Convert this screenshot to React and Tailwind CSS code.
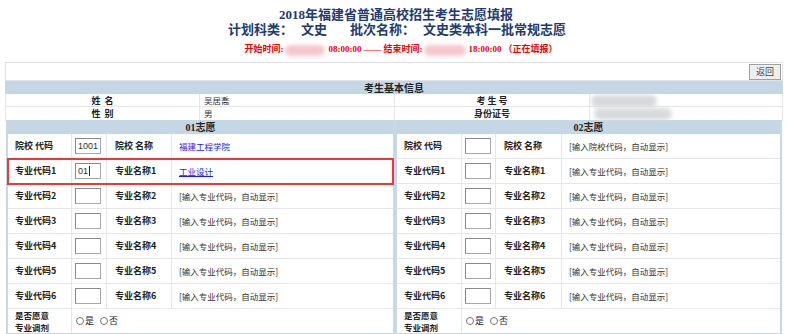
import React from "react";

const CJK = { fontFamily: '"Noto Sans CJK SC", "Noto Sans", sans-serif' };
const SERIF = { fontFamily: '"Liberation Serif", "Noto Sans CJK SC", serif' };

function Blob({ w, h, color, className = "" }) {
  return (
    <span
      className={`inline-block rounded-full blur-[2px] align-middle ${className}`}
      style={{ width: w, height: h, background: color }}
    />
  );
}

function Input({ value, caret }) {
  return (
    <div className="w-[26px] h-[16px] border border-[#a8a8a8] border-t-[#8a8a8a] border-l-[#8a8a8a] bg-white flex items-center pl-[2px] text-[9px] text-[#333] leading-none overflow-hidden" style={{ fontFamily: '"Liberation Sans", sans-serif' }}>
      {value}
      {caret && <span className="inline-block w-[1px] h-[10px] bg-[#222] ml-[1px]" />}
    </div>
  );
}

function Row({ label, label2, value, input, caret, highlight, cols }) {
  return (
    <div
      className={`grid ${cols} h-[25px] border-b border-[#e4e8ec] ${highlight ? "outline-2 outline-[#e8393c] -outline-offset-1 relative z-10" : ""}`}
    >
      <div className="border-r border-[#e4e8ec] flex items-center pl-[7px] text-[9px] font-bold text-[#222]">{label}</div>
      <div className="border-r border-[#e4e8ec] flex items-center pl-[3px]">
        <Input value={input} caret={caret} />
      </div>
      <div className="border-r border-[#e4e8ec] flex items-center pl-[8px] text-[9px] font-bold text-[#222]">{label2}</div>
      <div className="flex items-center pl-[7px] text-[8.5px]">{value}</div>
    </div>
  );
}

function Radio() {
  return <span className="inline-block w-[8px] h-[8px] rounded-full border border-[#777] mr-[1px] align-middle" />;
}

function Panel({ title, first, widthClass, cols }) {
  const hint = <span className="text-[#333]">[输入专业代码，自动显示]</span>;
  return (
    <div className={`${widthClass} border-x-2 border-b-2 border-[#c8d9e6]`}>
      <div className="h-[14px] bg-[#c5d7e4] flex items-center justify-center text-[10px] font-bold text-[#222]" style={SERIF}>
        {title}
      </div>
      {first ? (
        <>
          <Row cols={cols} label="院校 代码" label2="院校 名称" input="1001" value={<span className="text-[#1a1aff]">福建工程学院</span>} />
          <Row cols={cols} label="专业代码1" label2="专业名称1" input="01" caret highlight value={<span className="text-[#1a1aff] underline">工业设计</span>} />
        </>
      ) : (
        <>
          <Row cols={cols} label="院校 代码" label2="院校 名称" value={<span className="text-[#333]">[输入院校代码，自动显示]</span>} />
          <Row cols={cols} label="专业代码1" label2="专业名称1" value={hint} />
        </>
      )}
      {[2, 3, 4, 5, 6].map((n) => (
        <Row key={n} cols={cols} label={`专业代码${n}`} label2={`专业名称${n}`} value={hint} />
      ))}
      <div className={`grid ${cols} h-[24px]`}>
        <div className="border-r border-[#e4e8ec] flex flex-col justify-center pl-[7px] text-[8.5px] font-bold text-[#222]">
          <span className="block h-[12px] leading-[12px]">是否愿意</span>
          <span className="block h-[12px] leading-[12px]">专业调剂</span>
        </div>
        <div className="col-span-3 flex items-center pl-[4px] text-[9px] text-[#222]">
          <Radio />
          <span>是</span>
          <span className="ml-[6px]" />
          <Radio />
          <span>否</span>
        </div>
      </div>
    </div>
  );
}

export default function App() {
  return (
    <div className="w-[788px] h-[334px] bg-white overflow-hidden" style={CJK}>
      <div className="pt-[7px] pb-[6px] flex flex-col items-center" style={SERIF}>
        <div className="text-[13px] leading-[15px] font-bold text-[#243a6c] ml-[4px]">2018年福建省普通高校招生考生志愿填报</div>
        <div className="text-[13px] leading-[15px] font-bold text-[#243a6c] flex ml-[6px]">
          <span>计划科类：</span>
          <span className="ml-[8px]">文史</span>
          <span className="ml-[23px]">批次名称：</span>
          <span className="ml-[8px]">文史类本科一批常规志愿</span>
        </div>
        <div className="mt-[7px] h-[12px] flex items-center text-[9px] font-bold text-[#ee0000] ml-[14px]">
          <span>开始时间:</span>
          <Blob w={40} h={11} color="#f6c6cc" className="ml-[2px]" />
          <span className="ml-[3px]">08:00:00</span>
          <span className="ml-[2px]">——</span>
          <span className="ml-[2px]">结束时间:</span>
          <Blob w={42} h={11} color="#f6c6cc" className="ml-[2px]" />
          <span className="ml-[2px]">18:00:00</span>
          <span className="ml-[2px]">（正在填报）</span>
        </div>
      </div>

      <div className="ml-[5px] w-[778px]">
        <div className="h-[19px] border border-[#dfe3e6] flex items-center justify-end pr-[1px]">
          <div className="w-[32px] h-[16px] bg-[#efefef] border border-[#a0a0a0] flex items-center justify-center text-[9px] text-[#444]">
            返回
          </div>
        </div>
        <div className="h-[13px] bg-[#c5d7e4] flex items-center justify-center text-[10px] font-bold text-[#222]">
          考生基本信息
        </div>
        <div className="grid grid-cols-[195px_195px_195px_1fr] h-[13px] border-b border-[#e4e8ec] text-[9px]">
          <div className="border-x border-[#e4e8ec] flex items-center justify-center font-bold text-[#222]">姓&nbsp;&nbsp;名</div>
          <div className="border-r border-[#e4e8ec] flex items-center pl-[4px] text-[8.5px] text-[#333]">吴居喬</div>
          <div className="border-r border-[#e4e8ec] flex items-center justify-center font-bold text-[#222]">考&nbsp;生&nbsp;号</div>
          <div className="border-r border-[#e4e8ec] flex items-center pl-[1px]">
            <Blob w={66} h={12} color="#d6d9dc" />
          </div>
        </div>
        <div className="grid grid-cols-[195px_195px_195px_1fr] h-[13px] text-[9px]">
          <div className="border-x border-[#e4e8ec] flex items-center justify-center font-bold text-[#222]">性&nbsp;&nbsp;别</div>
          <div className="border-r border-[#e4e8ec] flex items-center pl-[4px] text-[8.5px] text-[#333]">男</div>
          <div className="border-r border-[#e4e8ec] flex items-center justify-center font-bold text-[#222]">身份证号</div>
          <div className="border-r border-[#e4e8ec] flex items-center pl-[4px]">
            <Blob w={78} h={12} color="#d8dadc" />
          </div>
        </div>
        <div className="flex pl-[1px]">
          <Panel title="01志愿" first widthClass="w-[389px]" cols="grid-cols-[64px_35px_65px_1fr]" />
          <Panel title="02志愿" widthClass="w-[387px]" cols="grid-cols-[65px_34px_66px_1fr]" />
        </div>
      </div>
    </div>
  );
}
